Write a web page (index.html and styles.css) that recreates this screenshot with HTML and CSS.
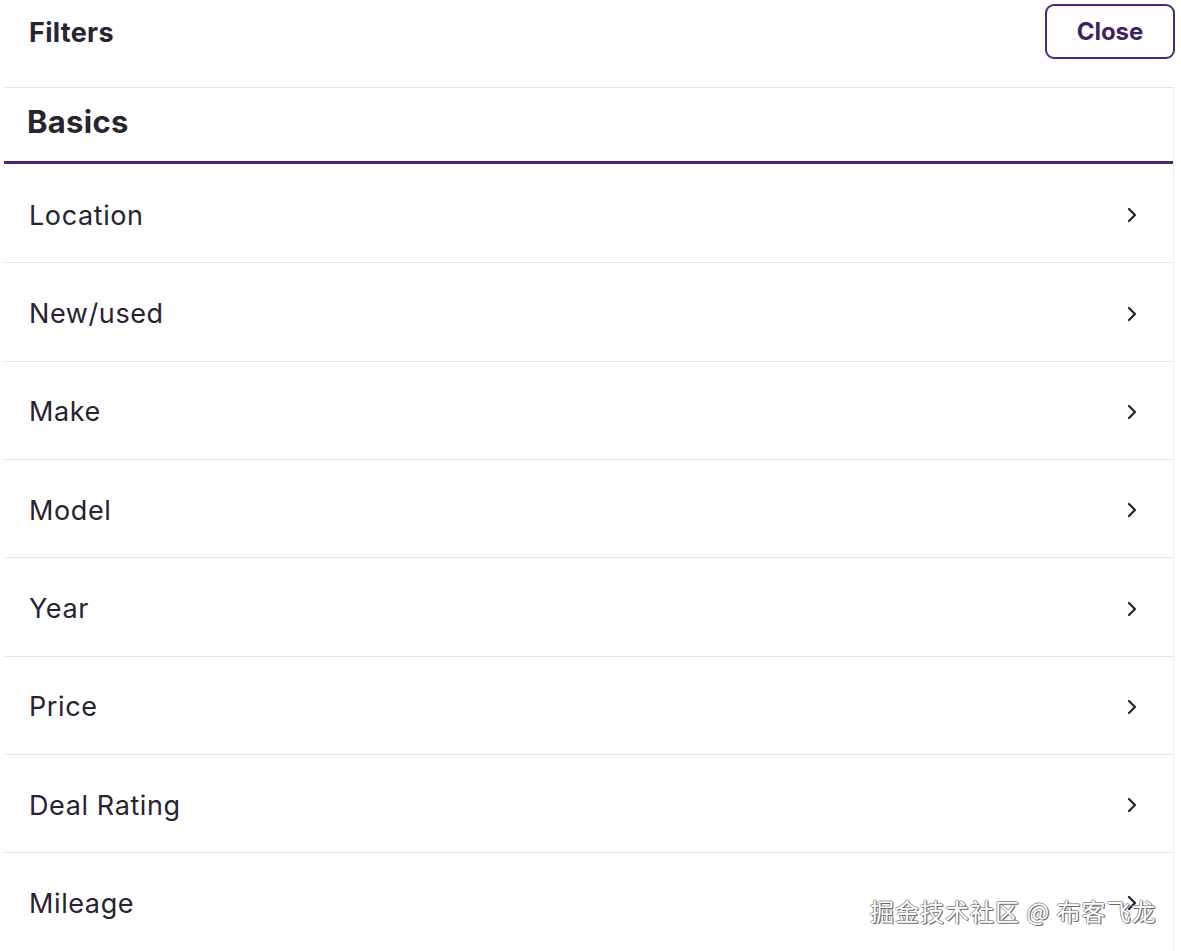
FILE: index.html
```html
<!DOCTYPE html>
<html lang="en">
<head>
<meta charset="utf-8">
<title>Filters</title>
<link rel="stylesheet" href="styles.css">
</head>
<body>
<div class="page">
  <header class="topbar">
    <h1 class="title">Filters</h1>
    <button class="close-btn" type="button">Close</button>
  </header>
  <section class="panel">
    <div class="tab">
      <h2 class="tab-title">Basics</h2>
    </div>
    <ul class="list">
      <li class="row"><span class="label">Location</span><svg class="chev" viewBox="0 0 12 16" width="12" height="16"><path d="M3 2 L9 8 L3 14" fill="none" stroke="currentColor" stroke-width="2.2" stroke-linecap="round" stroke-linejoin="round"/></svg></li>
      <li class="row"><span class="label">New/used</span><svg class="chev" viewBox="0 0 12 16" width="12" height="16"><path d="M3 2 L9 8 L3 14" fill="none" stroke="currentColor" stroke-width="2.2" stroke-linecap="round" stroke-linejoin="round"/></svg></li>
      <li class="row"><span class="label">Make</span><svg class="chev" viewBox="0 0 12 16" width="12" height="16"><path d="M3 2 L9 8 L3 14" fill="none" stroke="currentColor" stroke-width="2.2" stroke-linecap="round" stroke-linejoin="round"/></svg></li>
      <li class="row"><span class="label">Model</span><svg class="chev" viewBox="0 0 12 16" width="12" height="16"><path d="M3 2 L9 8 L3 14" fill="none" stroke="currentColor" stroke-width="2.2" stroke-linecap="round" stroke-linejoin="round"/></svg></li>
      <li class="row"><span class="label">Year</span><svg class="chev" viewBox="0 0 12 16" width="12" height="16"><path d="M3 2 L9 8 L3 14" fill="none" stroke="currentColor" stroke-width="2.2" stroke-linecap="round" stroke-linejoin="round"/></svg></li>
      <li class="row"><span class="label">Price</span><svg class="chev" viewBox="0 0 12 16" width="12" height="16"><path d="M3 2 L9 8 L3 14" fill="none" stroke="currentColor" stroke-width="2.2" stroke-linecap="round" stroke-linejoin="round"/></svg></li>
      <li class="row"><span class="label">Deal Rating</span><svg class="chev" viewBox="0 0 12 16" width="12" height="16"><path d="M3 2 L9 8 L3 14" fill="none" stroke="currentColor" stroke-width="2.2" stroke-linecap="round" stroke-linejoin="round"/></svg></li>
      <li class="row"><span class="label">Mileage</span><svg class="chev" viewBox="0 0 12 16" width="12" height="16"><path d="M3 2 L9 8 L3 14" fill="none" stroke="currentColor" stroke-width="2.2" stroke-linecap="round" stroke-linejoin="round"/></svg></li>
    </ul>
  </section>
  <div class="watermark">掘金技术社区 @ 布客飞龙</div>
</div>
</body>
</html>
```
FILE: styles.css
```css
* { box-sizing: border-box; }
html, body {
  margin: 0;
  padding: 0;
  background: #ffffff;
}
body {
  font-family: Inter, "Noto Sans", "Liberation Sans", sans-serif;
  color: #2a2430;
}
.page {
  position: relative;
  width: 1181px;
  height: 951px;
  overflow: hidden;
}
.topbar {
  height: 87px;
  display: flex;
  align-items: flex-start;
  justify-content: space-between;
  padding: 4px 6px 0 29px;
}
.title {
  margin: 11px 0 0 0;
  font-size: 27px;
  font-weight: 700;
  line-height: 36px;
  letter-spacing: 0.3px;
  color: #2b2330;
}
.close-btn {
  width: 130px;
  height: 55px;
  border: 2.5px solid #4b2a73;
  border-radius: 9px;
  background: #ffffff;
  color: #3f1f63;
  font-family: Inter, "Noto Sans", "Liberation Sans", sans-serif;
  font-size: 24px;
  font-weight: 700;
  padding: 0;
}
.panel {
  margin: 0 7px 0 4px;
  border-top: 1px solid #e6e6e6;
  border-right: 1px solid #ececec;
}
.tab {
  height: 76px;
  display: flex;
  align-items: center;
  padding: 0 0 6px 23px;
  border-bottom: 3.5px solid #4a2473;
}
.tab-title {
  margin: 0;
  font-size: 31px;
  font-weight: 700;
  letter-spacing: 0.3px;
  color: #2b2330;
}
.list {
  list-style: none;
  margin: 0;
  padding: 1.2px 0 0 0;
}
.row {
  height: 98.3px;
  display: flex;
  align-items: center;
  justify-content: space-between;
  padding: 3px 35px 0 25px;
  border-bottom: 1.5px solid #e4e4e4;
}
.label {
  font-size: 27px;
  font-weight: 400;
  letter-spacing: 0.6px;
  color: #2a2232;
}
.chev {
  color: #26222b;
  display: block;
}
.watermark {
  position: absolute;
  left: 870px;
  top: 895px;
  font-family: "Noto Sans CJK SC", "Noto Sans", sans-serif;
  font-size: 24px;
  line-height: 32px;
  letter-spacing: 1px;
  color: #ffffff;
  text-shadow: 1px 1px 0 #6a6a6a, -1px 0 0 #9a9a9a, 0 -1px 0 #9a9a9a, 1px 0 0 #7a7a7a;
  white-space: nowrap;
}
```
